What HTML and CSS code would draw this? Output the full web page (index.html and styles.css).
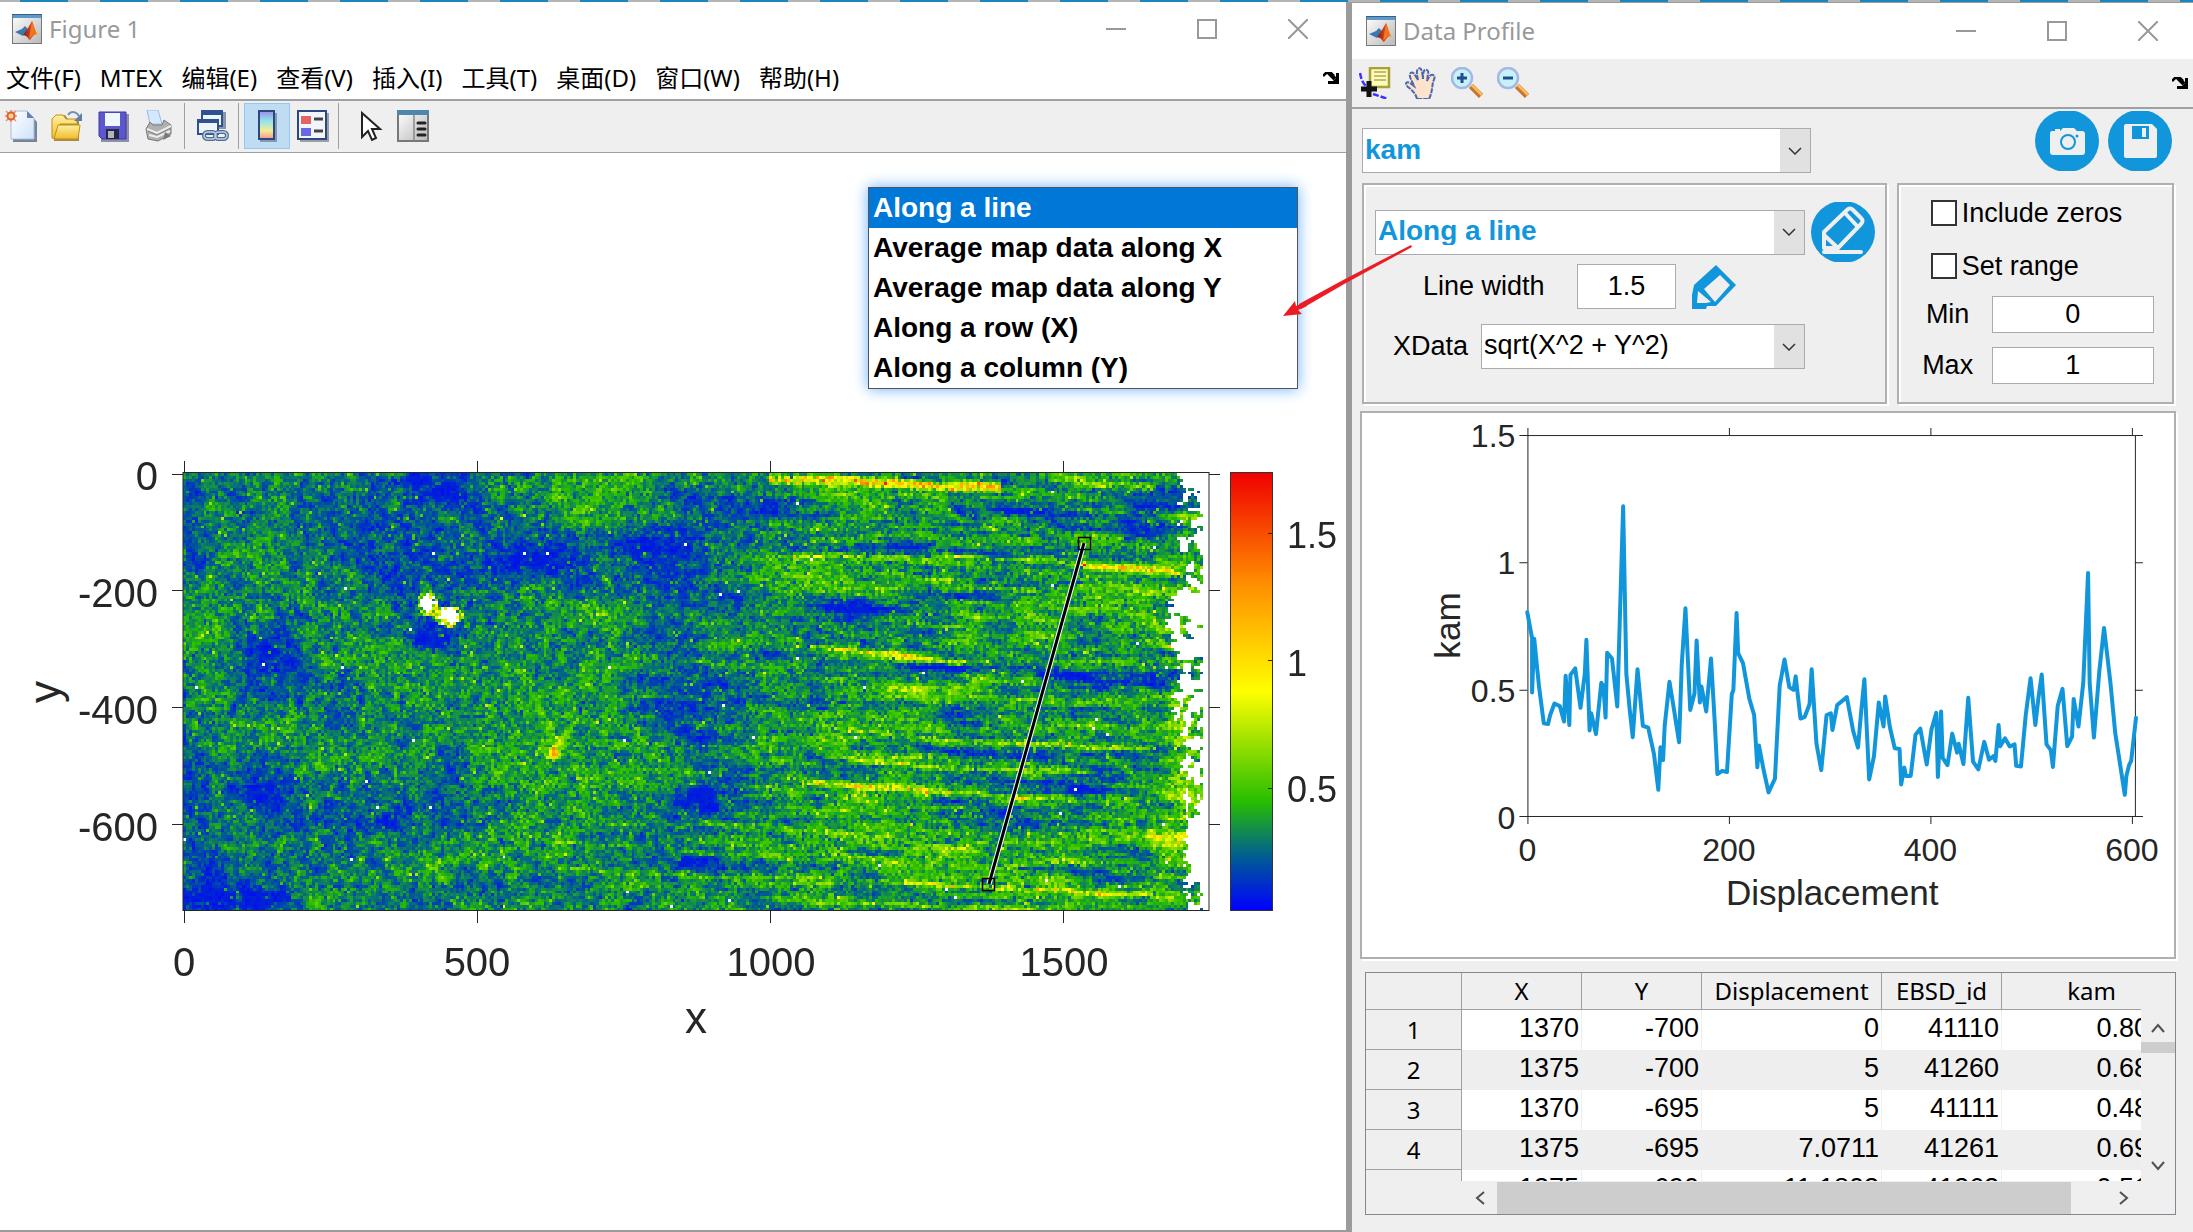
FILE: index.html
```html
<!DOCTYPE html>
<html lang="zh-CN">
<head>
<meta charset="utf-8">
<title>Figure 1 / Data Profile</title>
<link rel="stylesheet" href="styles.css">
</head>
<body>
<svg class="defs" aria-hidden="true">
  <defs>
    <linearGradient id="jet" x1="0" y1="1" x2="0" y2="0">
      <stop offset="0" stop-color="#0000ff"/><stop offset=".125" stop-color="#005f90"/><stop offset=".25" stop-color="#28be00"/><stop offset=".5" stop-color="#ffff00"/><stop offset=".75" stop-color="#ff8c00"/><stop offset="1" stop-color="#f00000"/>
    </linearGradient>
    <linearGradient id="paper" x1="0" y1="0" x2="1" y2="1"><stop offset="0" stop-color="#fff"/><stop offset="1" stop-color="#cfe2fb"/></linearGradient>
    <linearGradient id="gold" x1="0" y1="0" x2="0" y2="1"><stop offset="0" stop-color="#fff0a0"/><stop offset="1" stop-color="#f0bb2c"/></linearGradient>
    <linearGradient id="steel" x1="0" y1="0" x2="1" y2="1"><stop offset="0" stop-color="#fff"/><stop offset="1" stop-color="#b8b8b8"/></linearGradient>
    <linearGradient id="spectrum" x1="0" y1="0" x2="0" y2="1"><stop offset="0" stop-color="#9c8ce8"/><stop offset=".35" stop-color="#90e4ec"/><stop offset=".7" stop-color="#f4ec98"/><stop offset="1" stop-color="#f0988c"/></linearGradient>
    <linearGradient id="flame" x1="0" y1="0" x2="1" y2="0"><stop offset="0" stop-color="#7a1c10"/><stop offset=".5" stop-color="#d8401c"/><stop offset="1" stop-color="#f8a020"/></linearGradient>
    <symbol id="matlab" viewBox="0 0 30 30">
      <rect x=".5" y=".5" width="29" height="29" fill="url(#steel)" stroke="#777"/>
      <rect x="1" y="0" width="28" height="4" fill="#5d9ac9"/><path d="M0 .5h30" stroke="#345f88"/>
      <path d="M3 18l7-3 3-3 3 3-5 7z" fill="#3a78b4"/>
      <path d="M11 21l5-7 4-7c2 4 3 10 6 14-3-2-5 1-8 5-2-1-2-4-7-5z" fill="url(#flame)"/>
      <path d="M17 25c1-6 2-12 3-18l2 7-1 7z" fill="#f07820"/>
    </symbol>
    <symbol id="dock" viewBox="0 0 16 12"><path d="M0 4l3-3 5 0 3 3" fill="none" stroke="#000" stroke-width="2.500"/><path d="M6 1l6 6" stroke="#000" stroke-width="4"/><path d="M16 1v11H5V9h5l3-3V1z" fill="#000"/></symbol>
    <symbol id="chev" viewBox="0 0 14 8"><path d="M1 1l6 6 6-6" fill="none" stroke="#333" stroke-width="1.5"/></symbol>
  </defs>
</svg>
<div class="desktop">
  <section class="window figure">
    <header class="titlebar">
      <svg width="30" height="30"><use href="#matlab"/></svg><h1>Figure 1</h1>
      <div class="caption">
        <button aria-label="Minimize"><svg width="20" height="20"><path d="M0 10h20"/></svg></button>
        <button aria-label="Maximize"><svg width="20" height="20"><path d="M1 1h18v18H1z"/></svg></button>
        <button aria-label="Close"><svg width="20" height="20"><path d="M0 0l20 20M20 0L0 20"/></svg></button>
      </div>
    </header>
    <nav class="menubar">
      <a href="#">文件(F)</a><a href="#">MTEX</a><a href="#">编辑(E)</a><a href="#">查看(V)</a><a href="#">插入(I)</a><a href="#">工具(T)</a><a href="#">桌面(D)</a><a href="#">窗口(W)</a><a href="#">帮助(H)</a>
      <button class="dock" aria-label="Dock figure"><svg width="16" height="12"><use href="#dock"/></svg></button>
    </nav>
    <div class="toolbar">
      <button aria-label="New"><svg viewBox="0 0 32 32"><path d="M8 4h17l7 8v20H8z" fill="#76849a"/><path d="M6 1h16l7 7v21H6z" fill="url(#paper)" stroke="#a8bcd8"/><path d="M22 1v7h7z" fill="#6a7fb8"/><path d="M6 0v12M0 6h12M1 1l10 10M11 1L1 11" stroke="#f09070" stroke-width="1.5"/><circle cx="6" cy="6" r="3.5" fill="#fcd8a0" stroke="#e0602c" stroke-width="2"/></svg></button>
      <button aria-label="Open"><svg viewBox="0 0 32 32"><path d="M3 31V9l5-4h6l3 4h11v22z" fill="#a08a58"/><path d="M1 28V9l4-4h7l3 4h11v5H9L5 29z" fill="url(#gold)" stroke="#c4900c"/><path d="M7 15h22l-2 14H3z" fill="url(#gold)" stroke="#c4900c"/><path d="M17 5c3-4 8-4 11 1" fill="none" stroke="#6f90b4" stroke-width="2"/><path d="M31 3v8h-8z" fill="#5c7ea8"/></svg></button>
      <button aria-label="Save"><svg viewBox="0 0 32 32"><path d="M4 4h28v28H4z" fill="#8f90a8"/><path d="M2 2h27v27H5l-3-3z" fill="#5a58cc" stroke="#3c3aa0"/><path d="M8 3h15v13H8z" fill="#eef6ff"/><path d="M9 19h13v10H9z" fill="#26264c"/><path d="M11 21h6v7h-6z" fill="#b4b4b4"/></svg></button>
      <button aria-label="Print"><svg viewBox="0 0 32 32"><path d="M4 0h11l4 14H7z" fill="#d4e8ff" stroke="#98b8e4"/><path d="M3 19l4-7 3 3h9l2-5 7 5v9L15 31 5 29z" fill="#b0b0b0" stroke="#777"/><path d="M4 19l10 4 14-7M6 25l8 2 13-6" fill="none" stroke="#ececec" stroke-width="2"/><path d="M5 21l9 4 14-7" fill="none" stroke="#808080"/><path d="M22 22l6 4-8 4z" fill="#777"/></svg></button>
      <i></i>
      <button aria-label="Link plot"><svg viewBox="0 0 32 32"><path d="M6 2h23v17H6z" fill="#8a95a8"/><path d="M5 1h20v15H5z" fill="#eef4fc" stroke="#2f528f" stroke-width="2"/><path d="M4 0h22v5H4z" fill="#2f528f"/><path d="M1 10h20v14H1z" fill="#eef4fc" stroke="#2f528f" stroke-width="2"/><path d="M0 9h22v4H0z" fill="#2f528f"/><g fill="none" stroke="#4f6c90" stroke-width="4"><rect x="7" y="22" width="12" height="7" rx="3.5"/><rect x="18" y="22" width="12" height="7" rx="3.5"/></g><g fill="none" stroke="#bfd2e4" stroke-width="1.5"><rect x="7" y="22" width="12" height="7" rx="3.5"/><rect x="18" y="22" width="12" height="7" rx="3.5"/></g></svg></button>
      <i></i>
      <button class="active" aria-label="Insert colorbar"><svg viewBox="0 0 32 32"><path d="M9 3h17v29H9z" fill="#8298b4"/><path d="M8 1h15v28H8z" fill="url(#spectrum)" stroke="#2c487e" stroke-width="2"/></svg></button>
      <button aria-label="Insert legend"><svg viewBox="0 0 32 32"><path d="M3 3h29v29H3z" fill="#9a9fac"/><path d="M1 1h28v28H1z" fill="#f2f5fb" stroke="#2c487e" stroke-width="2"/><path d="M4 6h10v8H4z" fill="#e46464"/><path d="M4 18h10v8H4z" fill="#6868e4"/><path d="M17 9h9M17 21h9" stroke="#444" stroke-width="3"/></svg></button>
      <i></i>
      <button aria-label="Edit plot"><svg viewBox="0 0 32 32"><path d="M11 3v24l6-6 4 9 4-2-4-9h8z" fill="#fff" stroke="#222" stroke-width="2"/></svg></button>
      <button aria-label="Property inspector"><svg viewBox="0 0 32 32"><path d="M1 1h30v30H1z" fill="url(#steel)" stroke="#777" stroke-width="2"/><path d="M0 0h32v5H0z" fill="#4f86ae"/><path d="M17 5v26" stroke="#888" stroke-width="1.5"/><path d="M21 13h7M21 19h7M21 25h7" stroke="#222" stroke-width="3" stroke-linecap="round"/></svg></button>
    </div>
    <div class="axes">
      <svg class="plot" viewBox="0 153 1346 1075">
        <foreignObject x="183" y="473" width="1026" height="438"><canvas id="map" width="350" height="150"></canvas></foreignObject>
        <g class="axis">
          <rect x="183" y="472.5" width="1026" height="438"/>
          <path d="M184.5 461v12m293-12v12m293-12v12m293-12v12M184.5 911v12m293-12v12m293-12v12m293-12v12M172 474.5h11m-11 116h11m-11 117h11m-11 117h11M1209 474.5h11m-11 116h11m-11 117h11m-11 117h11"/>
        </g>
        <rect x="1230.500" y="472.5" width="42" height="438" fill="url(#jet)" stroke="#333"/>
        <path class="axis" d="M1268 533.500h4M1268 660.500h4M1268 788.500h4"/>
        <path d="M1084 543L989 884" stroke="#fff" stroke-width="5"/><path d="M1084 543L989 884" stroke="#000" stroke-width="3"/>
        <path d="M1078.500 537.500h12v12h-12zM982.500 878.500h12v12h-12z" fill="none" stroke="#000" stroke-width="1.500"/>
        <g class="tick end"><text x="158" y="490">0</text><text x="158" y="607">-200</text><text x="158" y="724">-400</text><text x="158" y="841">-600</text></g>
        <g class="tick mid"><text x="184" y="976">0</text><text x="477" y="976">500</text><text x="771" y="976">1000</text><text x="1064" y="976">1500</text></g>
        <g class="scale"><text x="1287" y="548">1.5</text><text x="1287" y="676">1</text><text x="1287" y="802">0.5</text></g>
        <g class="name mid"><text x="696" y="1033">x</text><text transform="translate(60 692) rotate(-90)">y</text></g>
      </svg>
      <ul class="popup" role="listbox" aria-label="Profile direction">
        <li role="option" aria-selected="true">Along a line</li><li role="option">Average map data along X</li><li role="option">Average map data along Y</li><li role="option">Along a row (X)</li><li role="option">Along a column (Y)</li>
      </ul>
    </div>
  </section>

  <section class="window dialog">
    <header class="titlebar">
      <svg width="30" height="30"><use href="#matlab"/></svg><h1>Data Profile</h1>
      <div class="caption">
        <button aria-label="Minimize"><svg width="20" height="20"><path d="M0 10h20"/></svg></button>
        <button aria-label="Maximize"><svg width="20" height="20"><path d="M1 1h18v18H1z"/></svg></button>
        <button aria-label="Close"><svg width="20" height="20"><path d="M0 0l20 20M20 0L0 20"/></svg></button>
      </div>
    </header>
    <div class="toolbar">
      <button aria-label="Data cursor"><svg viewBox="0 0 32 32"><path d="M1 6c1 5 2 9 6 13M14 27l15 5" fill="none" stroke="#3a30ff" stroke-width="2.500" stroke-dasharray="6 2"/><path d="M11 1h19v19H11z" fill="#fdfbb4" stroke="#a8a03c" stroke-width="2.500"/><path d="M15 5h12M15 9h12M15 13h12" stroke="#b0a860" stroke-width="1.500"/><path d="M10 14v16M2 22h16" stroke="#111" stroke-width="5"/></svg></button>
      <button aria-label="Pan"><svg viewBox="0 0 32 32"><path d="M12 32c-1-5-5-9-9-12-4-4-1-6 2-4l4 3C7 14 4 10 5 7s4-1 5 1l3 5c-1-5-2-9 0-11s3 0 4 2l1 8c0-4 0-8 2-9s4 1 3 4l-1 7c2-4 3-7 6-6s1 5 0 7c-1 6-1 11-4 17z" fill="#fde2cc" stroke="#4868b0" stroke-width="2" stroke-dasharray="5 1"/></svg></button>
      <button aria-label="Zoom in"><svg viewBox="0 0 32 32"><path d="M20 19l10 10" stroke="#c07830" stroke-width="6"/><path d="M21 18l10 10" stroke="#fbb860" stroke-width="3"/><circle cx="11" cy="11" r="10" fill="#c8f0f8" stroke="#a4b8e4" stroke-width="2.500"/><path d="M11 6v10M6 11h10" stroke="#1f4e8c" stroke-width="3"/></svg></button>
      <button aria-label="Zoom out"><svg viewBox="0 0 32 32"><path d="M20 19l10 10" stroke="#c07830" stroke-width="6"/><path d="M21 18l10 10" stroke="#fbb860" stroke-width="3"/><circle cx="11" cy="11" r="10" fill="#c8f0f8" stroke="#a4b8e4" stroke-width="2.500"/><path d="M6 11h10" stroke="#1f4e8c" stroke-width="3"/></svg></button>
      <button class="dock" aria-label="Dock figure"><svg width="16" height="12"><use href="#dock"/></svg></button>
    </div>
    <form class="body">
      <div class="top">
        <div class="combo bold"><select aria-label="Property"><option>kam</option></select><span><svg width="14" height="8"><use href="#chev"/></svg></span></div>
        <div class="actions">
          <button type="button" class="round" aria-label="Snapshot"><svg viewBox="0 0 64 60"><ellipse cx="32" cy="30" rx="32" ry="31"/><path d="M17 20h3v-2h5v2l3-3h11l3 3h5q3 0 3 3v18q0 3-3 3H18q-3 0-3-3V23q0-3 2-3z" fill="#efefef"/><circle cx="33" cy="31" r="7" fill="none" stroke="#1296db" stroke-width="2"/><circle cx="42" cy="25" r="1.500"/></svg></button>
          <button type="button" class="round" aria-label="Save profile"><svg viewBox="0 0 64 60"><ellipse cx="32" cy="30" rx="32" ry="31"/><path d="M18 13h26l5 5v27q0 2-2 2H18q-2 0-2-2V15q0-2 2-2z" fill="#efefef"/><path d="M24 15h17v13H24z"/><path d="M34 17h4v9h-4z" fill="#efefef"/></svg></button>
        </div>
      </div>
      <div class="groups">
        <fieldset class="line-opts">
          <div class="row">
            <div class="combo bold"><select aria-label="Profile direction"><option>Along a line</option></select><span><svg width="14" height="8"><use href="#chev"/></svg></span></div>
            <button type="button" class="round" aria-label="Draw line"><svg viewBox="0 0 64 60"><ellipse cx="32" cy="30" rx="32" ry="31"/><g fill="none" stroke="#efefef" stroke-width="4" stroke-linejoin="round"><path d="M13 30L36 8q3-3 6 0l8 8q3 3 0 6L27 46H13zM34 11l13 14M13 33l14 13"/><path d="M13 50h37" stroke-linecap="round"/></g></svg></button>
          </div>
          <div class="row width">
            <label for="lw">Line width</label><input id="lw" value="1.5">
            <button type="button" class="pen" aria-label="Line colour"><svg width="44" height="44" viewBox="0 0 44 44"><path fill-rule="evenodd" fill="#1296db" d="M24 0l20 20-20 21h-9l-1 3H0V30l2-10zM28 10L12 24l11 13 15-17zM6 26L5 38h9l5-1z"/></svg></button>
          </div>
          <div class="row xdata">
            <label for="xd">XData</label><div class="combo"><select id="xd"><option>sqrt(X^2 + Y^2)</option></select><span><svg width="14" height="8"><use href="#chev"/></svg></span></div>
          </div>
        </fieldset>
        <fieldset class="range-opts">
          <label class="check"><input type="checkbox">Include zeros</label>
          <label class="check"><input type="checkbox">Set range</label>
          <div class="field"><label for="mn">Min</label><input id="mn" value="0"></div>
          <div class="field"><label for="mx">Max</label><input id="mx" value="1"></div>
        </fieldset>
      </div>
      <div class="panel">
        <svg class="plot" viewBox="1363 413 810 543">
          <g class="axis">
            <rect x="1528.500" y="435.500" width="606" height="380"/>
            <path d="M1528.500 428v8m201-8v8m201-8v8m201-8v8M1528.500 815v8m201-8v8m201-8v8m201-8v8M1520 435.500h8m-8 127h8m-8 127h8m-8 126h8M2134 435.500h8m-8 127h8m-8 127h8m-8 126h8"/>
          </g>
          <polyline class="curve" transform="matrix(.53125 0 0 .35714 1360 400)" points="316,593 325,665 325,817 329,667 338,800 347,903 355,905 359,880 367,848 377,855 385,898 388,770 395,908 397,768 406,750 416,860 424,765 427,670 433,923 436,875 445,933 455,790 459,800 463,887 466,706 475,722 485,856 490,600 496,297 502,765 508,860 514,942 523,752 533,910 543,915 554,990 562,1089 566,970 571,1006 574,910 583,787 592,870 601,956 606,740 613,582 622,866 630,820 634,672 640,845 643,800 652,870 661,722 668,900 673,1045 682,1036 691,1039 700,822 703,810 709,595 712,707 721,735 733,835 742,880 748,1026 751,965 760,1035 769,1096 781,1058 790,798 799,725 808,802 816,810 820,772 829,890 837,885 846,850 850,752 859,960 868,1034 878,880 886,875 889,922 898,852 916,830 928,925 937,971 943,870 949,780 958,1060 967,995 976,845 985,912 988,828 997,915 1006,973 1015,975 1018,1074 1024,1027 1027,1050 1036,1050 1045,935 1054,918 1066,1018 1075,920 1084,874 1087,1053 1093,870 1096,1000 1105,1020 1114,932 1123,985 1126,960 1135,1017 1144,832 1153,1010 1163,1032 1174,955 1183,1005 1191,995 1195,1008 1201,908 1204,967 1213,945 1222,968 1231,962 1234,1022 1243,1024 1252,880 1261,777 1270,908 1276,830 1282,767 1291,962 1299,978 1303,1025 1312,855 1321,807 1330,967 1339,940 1342,835 1351,912 1360,790 1369,483 1372,790 1380,943 1390,760 1399,637 1411,790 1420,930 1438,1103 1441,1050 1446,1020 1450,1008 1459,888"/>
          <g class="tick small end"><text x="1516" y="447">1.5</text><text x="1516" y="574">1</text><text x="1516" y="701">0.5</text><text x="1516" y="828">0</text></g>
          <g class="tick small mid"><text x="1528" y="860">0</text><text x="1729" y="860">200</text><text x="1930" y="860">400</text><text x="2131" y="860">600</text></g>
          <g class="title mid"><text x="1832" y="904">Displacement</text><text transform="translate(1461 625) rotate(-90)">kam</text></g>
        </svg>
      </div>
      <div class="grid">
        <div class="cells">
          <table>
            <colgroup><col class="c-row"><col class="c-num"><col class="c-num"><col class="c-wide"><col class="c-num"><col class="c-wide"></colgroup>
            <thead><tr><th></th><th>X</th><th>Y</th><th>Displacement</th><th>EBSD_id</th><th>kam</th></tr></thead>
            <tbody>
              <tr><th>1</th><td>1370</td><td>-700</td><td>0</td><td>41110</td><td>0.8047</td></tr>
              <tr><th>2</th><td>1375</td><td>-700</td><td>5</td><td>41260</td><td>0.6812</td></tr>
              <tr><th>3</th><td>1370</td><td>-695</td><td>5</td><td>41111</td><td>0.4853</td></tr>
              <tr><th>4</th><td>1375</td><td>-695</td><td>7.0711</td><td>41261</td><td>0.6948</td></tr>
              <tr><th></th><td>1375</td><td>-690</td><td>11.1803</td><td>41262</td><td>0.5127</td></tr>
            </tbody>
          </table>
        </div>
        <div class="vbar"><svg width="14" height="10"><path d="M1 9l6-7 6 7"/></svg><b></b><svg width="14" height="10"><path d="M1 1l6 7 6-7"/></svg></div>
        <div class="hbar"><svg width="10" height="14"><path d="M9 1L2 7l7 6"/></svg><b></b><svg width="10" height="14"><path d="M1 1l7 6-7 6"/></svg></div>
      </div>
    </form>
  </section>
  <svg class="pointer" viewBox="0 0 2193 1232"><path d="M1411 245L1345 279 1299 304 1301 309 1346 283 1412 247z" fill="#ed1c24"/><path d="M1283 316l12-15 1 5 9-4 2 4-9 4 4 4z" fill="#ed1c24"/></svg>
</div>
<script src="script.js"></script>
</body>
</html>
```
FILE: styles.css
```css
* { box-sizing: border-box; }
body { margin: 0; background: #9b9b9b; font: 27px/1 "Liberation Sans", Arial, sans-serif; color: #000; }
svg { display: block; }
.defs { position: absolute; width: 0; height: 0; }
button { appearance: none; border: 0; background: none; padding: 0; margin: 0; font: inherit; }
.desktop { position: relative; display: grid; grid-template-columns: 1346fr 841fr; column-gap: 6px; min-height: 100vh; padding-top: 2px; background: repeating-linear-gradient(90deg, #b4b4b4 0 20px, #1b86bd 20px 68px, #b4b4b4 68px 80px) 0 0 / 100% 2px no-repeat, #9b9b9b; }
.window { display: flex; flex-direction: column; min-width: 0; background: #fff; }
.figure { margin-bottom: 2px; }
.dialog { margin-top: 1px; background: #efefef; }

.titlebar { display: flex; align-items: center; height: 54px; padding: 0 38px 0 12px; gap: 7px; background: #fff; }
.dialog .titlebar { height: 56px; padding: 0 35px 0 14px; }
.titlebar h1 { margin: 0; font: 24px/30px "Noto Sans", sans-serif; color: #999; }
.caption { display: flex; gap: 71px; margin-left: auto; }
.caption path { fill: none; stroke: #999; stroke-width: 2px; }

.menubar { display: flex; align-items: center; gap: 19px; height: 45px; padding: 0 7px 0 6px; border-bottom: 2px solid #a0a0a0; font: 24px/30px "Noto Sans", "Noto Sans CJK SC", sans-serif; }
.menubar a { color: #000; text-decoration: none; white-space: nowrap; }
.dock { margin-left: auto; }
.toolbar { display: flex; align-items: center; height: 52px; padding: 0 7px 2px 5px; background: #efefef; border-bottom: 1px solid #a0a0a0; }
.toolbar button { margin-right: 14px; }
.toolbar button > svg { width: 32px; height: 32px; }
.toolbar i { width: 1px; height: 46px; margin: 0 12px 0 -5px; background: #a0a0a0; }
.toolbar .active { padding: 6px; margin: 0 7px 0 -7px; border: 1px solid #90c8f6; background: #c0dcf3; }
.toolbar .dock { margin: 0 0 0 auto; }
.toolbar .dock svg { width: 16px; height: 12px; }
.dialog .toolbar { height: 50px; border-bottom: 2px solid #a0a0a0; padding: 0 5px 0 7px; }

.axes { position: relative; flex: 1; }
.plot { width: 100%; height: auto; font-family: "Liberation Sans", Arial, sans-serif; fill: #262626; }
#map { display: block; width: 1026px; height: 438px; image-rendering: pixelated; }
.axis, .axis rect, .axis path { fill: none; stroke: #262626; stroke-width: 1px; }
.tick { font-size: 40px; }
.small { font-size: 32px; }
.scale { font-size: 36px; }
.name { font-size: 44px; }
.title { font-size: 35px; }
.mid { text-anchor: middle; }
.end { text-anchor: end; }
.curve { fill: none; stroke: #1296db; stroke-width: 4px; stroke-linejoin: round; stroke-linecap: round; vector-effect: non-scaling-stroke; }
.popup { position: absolute; top: 34px; right: 48px; width: 430px; margin: 0; padding: 0; list-style: none; background: #fff; border: 1px solid #555; box-shadow: 0 0 14px #6ab0ff; font-weight: bold; font-size: 28px; line-height: 40px; }
.popup li { padding-left: 4px; }
.popup [aria-selected] { background: #0078d7; color: #fff; }
.pointer { position: absolute; top: 0; left: 0; width: 100%; height: auto; pointer-events: none; }

.body { padding: 2px 19px 0 10px; }
.top { display: flex; justify-content: space-between; align-items: flex-start; height: 62px; }
.combo { display: flex; height: 45px; flex: 1; min-width: 0; border: 1px solid #aaabb0; background: #fff; }
.combo select { appearance: none; flex: 1; min-width: 0; border: 0; padding: 0 0 2px 2px; background: #fff; color: #000; font: inherit; }
.combo span { display: grid; place-items: center; width: 30px; background: #e1e1e1; }
.bold select { font-weight: bold; font-size: 28px; color: #1296db; }
.top .combo { align-self: flex-end; flex: 0 0 449px; }
.actions { display: flex; gap: 9px; padding-right: 2px; }
.round svg { width: 64px; height: 60px; fill: #1296db; }
.groups { display: grid; grid-template-columns: 524fr 277fr; gap: 10px; margin: 10px 0 7px; height: 221px; }
fieldset, .panel { margin: 0; min-width: 0; border: 2px solid #b0b0b0; box-shadow: 2px 2px 0 #fff, inset 2px 2px 0 #fff; }
.line-opts { padding: 17px 10px 0 11px; }
.row { display: flex; align-items: center; gap: 6px; }
.width { height: 45px; margin-top: 2px; padding-left: 48px; gap: 16px; }
.width label { width: 138px; }
.xdata { margin-top: 15px; padding: 0 70px 0 18px; }
.xdata label { width: 82px; }
.row input, .field input { min-width: 0; height: 100%; padding: 0; border: 1px solid #aaabb0; background: #fff; font: inherit; text-align: center; }
.row input { width: 99px; }
.range-opts { display: flex; flex-direction: column; padding: 15px 18px 0 17px; }
.check { display: flex; align-items: center; height: 26px; margin-bottom: 27px; padding-left: 15px; gap: 5px; white-space: nowrap; }
.check + .check { margin-bottom: 17px; }
.check input { appearance: none; flex: none; width: 26px; height: 26px; margin: 0; border: 2px solid #333; background: #fff; }
.field { display: flex; align-items: center; gap: 12px; height: 37px; margin-bottom: 14px; }
.field label { width: 64px; text-align: center; }
.field input { flex: 1; }
.panel { margin: 0 -2px; background: #fff; }

.grid { display: grid; grid-template-columns: 1fr 34px; grid-template-rows: 208px 33px; margin: 13px -2px 0 3px; border: 1px solid #828790; }
.cells { overflow: hidden; }
table { table-layout: fixed; width: 816px; border-collapse: separate; border-spacing: 0; }
.c-row { width: 96px; } .c-num { width: 120px; } .c-wide { width: 180px; }
th { height: 40px; padding: 0; font: 24px/30px "Noto Sans", sans-serif; border-right: 1px solid #a0a0a0; border-bottom: 1px solid #a0a0a0; background: #efefef; }
thead th { height: 37px; }
td { height: 40px; padding: 0 2px 3px 0; text-align: right; border-right: 1px solid #efefef; background: #fff; }
tbody tr:nth-child(even) td { background: #eee; }
.vbar, .hbar { display: flex; align-items: center; }
.vbar { flex-direction: column; padding: 50px 0 10px; }
.vbar b { width: 100%; height: 11px; margin: 9px 0 auto; background: #cdcdcd; }
.hbar { padding: 0 12px 0 109px; }
.hbar b { width: 574px; height: 32px; margin: 0 auto 0 12px; background: #cdcdcd; }
.grid path { fill: none; stroke: #505050; stroke-width: 2px; }
```
FILE: script.js
```js
// Kernel average misorientation map, one canvas pixel per 5 x 5 unit cell.
const canvas = document.getElementById('map');
const W = 350, H = 150;
const ctx = canvas.getContext('2d');
const img = ctx.createImageData(W, H);

let seed = 20771;
const rnd = () => {
  seed = (seed + 0x6d2b79f5) | 0;
  let t = Math.imul(seed ^ (seed >>> 15), 1 | seed);
  t ^= t + Math.imul(t ^ (t >>> 7), 61 | t);
  return ((t ^ (t >>> 14)) >>> 0) / 4294967296;
};

// Smooth noise with its own cell size along each axis.
function layer(sx, sy) {
  const nx = Math.ceil(W / sx) + 3, ny = Math.ceil((H + 40) / sy) + 3;
  const g = Array.from({ length: nx * ny }, () => rnd() * 2 - 1);
  return (u, v) => {
    const x = u / sx, y = Math.max(0, v) / sy, i = x | 0, j = y | 0;
    const a = x - i, b = y - j, k = j * nx + i;
    return (g[k] * (1 - a) + g[k + 1] * a) * (1 - b) + (g[k + nx] * (1 - a) + g[k + nx + 1] * a) * b;
  };
}
const broad = layer(28, 20), patch = layer(9, 7), fine = layer(3, 3), grain = layer(1.6, 1.6);
const streak = layer(26, 2), streak2 = layer(8, 1.2), dash = layer(3, 1);

// [u, v, radius u, radius v, amount]
const blobs = [
  [126, 30, 16, 8, -.12], [154, 25, 14, 8, -.12], [138, 40, 10, 5, -.08], [80, 20, 34, 16, -.06],
  [84, 56, 8, 5, -.15], [84, 6, 18, 7, -.06], [27, 70, 10, 12, -.07], [27, 107, 9, 10, -.12],
  [21, 145, 14, 7, -.15], [3, 25, 6, 18, -.07], [4, 110, 7, 18, -.08], [5, 142, 8, 12, -.08],
  [50, 120, 14, 12, -.05], [75, 118, 14, 9, -.05], [165, 55, 14, 12, -.07], [231, 46, 11, 4, -.16], [218, 45, 8, 4, -.10],
  [175, 112, 9, 5, -.13], [175, 133, 14, 4, -.15], [261, 66, 14, 2, -.16], [307, 107, 18, 5, -.11],
  [190, 12, 28, 6, -.08], [175, 30, 16, 20, -.06], [175, 78, 16, 12, -.06], [320, 18, 14, 8, -.08],
  [29, 28, 10, 14, .06], [30, 8, 8, 8, .05], [135, 4, 26, 4, .07], [145, 13, 20, 5, .08],
  [8, 56, 12, 12, .05], [72, 62, 18, 10, .05], [62, 98, 14, 10, .04], [115, 80, 28, 22, .04],
  [122, 98, 14, 14, .05], [82, 130, 9, 9, .06], [142, 45, 18, 6, .05], [118, 130, 20, 7, .04],
  [160, 105, 12, 6, .06], [340, 100, 5, 30, .1], [334, 124, 5, 7, .2], [290, 47, 14, 5, .06],
  [260, 72, 18, 6, .05], [215, 40, 28, 7, .04], [295, 130, 18, 5, .06], [126, 96, 1.6, 2, .45], [128, 93, 1.5, 2, .25]
];
// [u0, v0, u1, v1, half width, amount]
const lines = [
  [200, 1.8, 278, 4, 1.5, .5], [297, 1, 331, 5, 1, .2], [255, 27, 307, 30.5, .9, .25],
  [307, 30.5, 340, 34, 1.1, .36], [208, 28, 255, 29, 1, .2], [214, 59.5, 266, 64, .9, .34],
  [227, 88, 270, 91.5, .9, .2], [270, 91.5, 331, 94, .9, .24], [227, 98, 267, 101, .9, .22],
  [267, 101, 307, 101, .8, .15], [211, 106, 261, 108.7, 1.1, .34], [261, 108.7, 307, 112, .8, .2],
  [170, 118, 238, 125, 1, .13], [238, 125, 273, 129, .9, .13], [170, 129, 260, 132, .8, .1],
  [170, 137, 246, 139.5, .8, .11], [246, 139.5, 330, 144, .9, .27], [279, 134, 307, 132.5, .9, .2],
  [120, 125, 176, 129.5, .8, .1], [128, 135, 176, 138, .8, .1], [143, 76, 176, 76, .8, .07],
  [214, 23, 236, 22.5, .8, .18], [255, 39, 290, 39, .8, .15], [230, 147, 290, 149, .9, .13],
  [112, 17, 130, 3, 1, .06], [120, 100, 136, 82, .9, .09], [330, 144, 342, 120, 1, .15],
  [291, 69, 334, 72, 2, -.12], [240, 11, 331, 14, 2.5, -.08], [225, 32, 255, 34, 1, -.12],
  [250, 93, 300, 98, 2, -.1], [262, 113, 300, 119, 2, -.08]
];
const stops = [[0, 0, 0, 255], [.125, 0, 95, 144], [.25, 40, 190, 0], [.5, 255, 255, 0], [.75, 255, 140, 0], [1, 240, 0, 0]];
function color(t) {
  t = Math.min(1, Math.max(0, t));
  let i = 1;
  while (t > stops[i][0]) i++;
  const a = stops[i - 1], b = stops[i], f = (t - a[0]) / (b[0] - a[0]);
  return [1, 2, 3].map(k => a[k] + (b[k] - a[k]) * f);
}
// Right-hand border of the indexed region.
const edge = [[0, 339], [12, 339], [25, 339], [34, 342], [40, 338], [50, 335], [57, 337], [68, 340], [76, 336], [87, 339], [113, 341], [120, 341], [150, 342]];
const rim = v => {
  let i = 1;
  while (i < edge.length - 1 && v > edge[i][0]) i++;
  const [a, p] = edge[i - 1], [b, q] = edge[i];
  return p + (q - p) * (v - a) / (b - a);
};
const crumbs = [[5, 40, .62], [48, 56, .4], [63, 74, .45], [76, 118, .64], [134, 150, .5]];
const frag = layer(2, 2);

for (let v = 0; v < H; v++) {
  const jag = Math.round(rnd() * 3 - 1.5);
  for (let u = 0; u < W; u++) {
    const right = Math.min(1, Math.max(0, (u - 130) / 110));
    const s = v - (u - 175) * .045 + 12;
    let t = .165 + .03 * right + broad(u, v) * .03 + patch(u, v) * .04 + fine(u, v) * .045 * (1 - right * .6);
    t += grain(u, v) * .07 * (1 - right * .4);
    t += right * (streak(u, s) * .09 + streak2(u, s) * .075 + dash(u, s) * .04);
    for (const [x, y, a, b, k] of blobs) {
      const d = ((u - x) / a) ** 2 + ((v - y) / b) ** 2;
      if (d < 6) t += k * Math.exp(-d);
    }
    for (const [x0, y0, x1, y1, w, k] of lines) {
      if (u < x0 || u > x1) continue;
      const d = (v - (y0 + (y1 - y0) * (u - x0) / (x1 - x0)) - patch(u, 20) * .8) / w;
      if (Math.abs(d) < 3) t += k * Math.exp(-d * d) * (.4 + rnd() * .8);
    }
    const n = (rnd() + rnd() + rnd()) / 1.5 - 1;
    t += n * (.05 + Math.max(0, t) * .42);
    if (rnd() < .025) t += rnd() * .22;
    t = Math.max(.02 + rnd() * .03, t);

    let white = rnd() < .0011;
    const r = rim(v) + jag;
    if (u > r) {
      const c = crumbs.find(c => v >= c[0] && v <= c[1]);
      white = !c || u > 347 || frag(u, v) < .5 - c[2] + (u - r) * .03;
      t += .03;
    }
    const core = Math.min(Math.hypot((u - 83) / 2.6, (v - 44) / 2.8), Math.hypot((u - 90) / 3.6, (v - 48.500) / 2.4));
    if (core + rnd() * .6 < 1.25) white = true;
    else if (core < 1.5) t += rnd() * .5;
    const rgb = white ? [255, 255, 255] : color(t);
    img.data.set([...rgb, 255], (v * W + u) * 4);
  }
}
ctx.putImageData(img, 0, 0);
```
